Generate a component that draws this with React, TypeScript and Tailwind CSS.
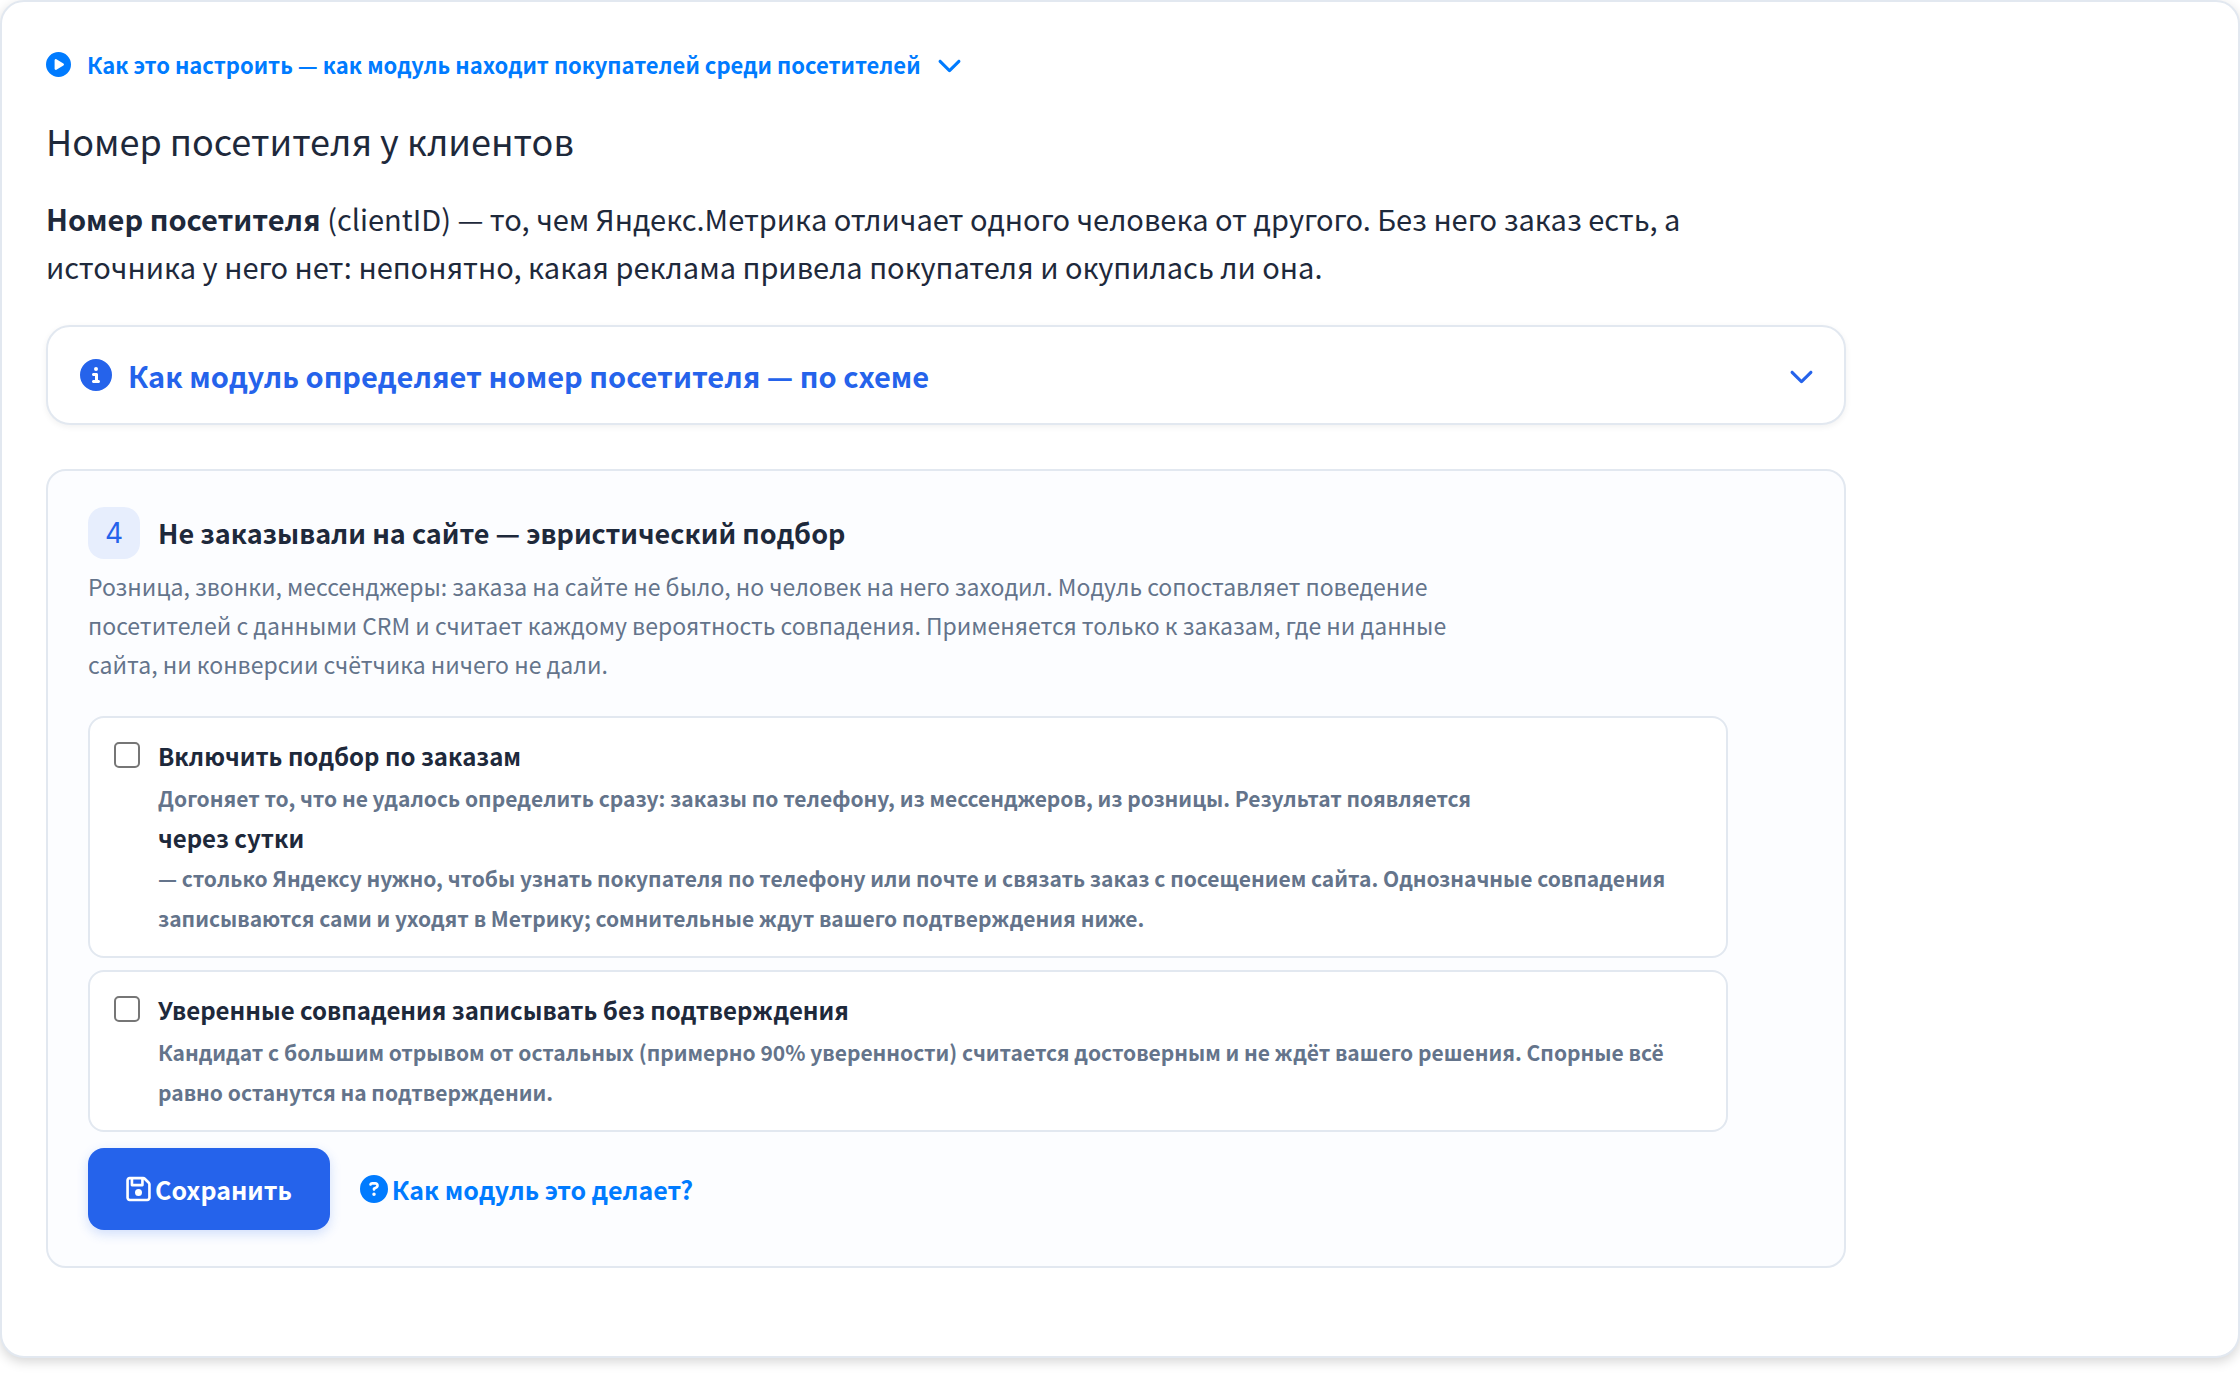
import {
  FaChevronDown,
  FaCircleInfo,
  FaCirclePlay,
  FaCircleQuestion,
  FaRegFloppyDisk,
} from "react-icons/fa6";

const options = [
  {
    id: "match-orders",
    title: "Включить подбор по заказам",
    lines: [
      {
        text: "Догоняет то, что не удалось определить сразу: заказы по телефону, из мессенджеров, из розницы. Результат появляется",
      },
      { text: "через сутки", strong: true },
      {
        text: "— столько Яндексу нужно, чтобы узнать покупателя по телефону или почте и связать заказ с посещением сайта. Однозначные совпадения записываются сами и уходят в Метрику; сомнительные ждут вашего подтверждения ниже.",
      },
    ],
  },
  {
    id: "auto-confirm",
    title: "Уверенные совпадения записывать без подтверждения",
    lines: [
      {
        text: "Кандидат с большим отрывом от остальных (примерно 90% уверенности) считается достоверным и не ждёт вашего решения. Спорные всё равно останутся на подтверждении.",
      },
    ],
  },
];

const App = () => {
  return (
    <div className="bg-white pb-7 font-['Noto_Sans_CJK_SC','Noto_Sans',sans-serif] text-[#1e293b]">
      <main className="rounded-3xl border-2 border-[#e2e8f0] bg-white px-11 pt-[38px] pb-[88px] shadow-[0_4px_12px_rgba(0,0,0,0.16)]">
        <button className="flex items-center gap-4 text-[22px] leading-[48px] font-bold text-[#007bff]">
          <FaCirclePlay className="size-[25px]" />
          Как это настроить — как модуль находит покупателей среди посетителей
          <FaChevronDown className="size-[25px]" />
        </button>

        <h1 className="mt-[22px] text-[36px] leading-[60px]">Номер посетителя у клиентов</h1>

        <p className="mt-6 max-w-[1680px] text-[29px] leading-[48px]">
          <b>Номер посетителя</b> (clientID) — то, чем Яндекс.Метрика отличает одного человека от другого. Без него
          заказ есть, а источника у него нет: непонятно, какая реклама привела покупателя и окупилась ли она.
        </p>

        <button className="mt-[35px] flex w-full max-w-[1800px] items-center gap-4 rounded-3xl border-2 border-[#e2e8f0] bg-white py-6 pr-[30px] pl-8 text-left text-[29px] leading-[48px] font-bold text-[#2563eb] shadow-[0_2px_6px_rgba(0,0,0,0.06)]">
          <FaCircleInfo className="size-8" />
          <span className="grow">Как модуль определяет номер посетителя — по схеме</span>
          <FaChevronDown className="size-[25px]" />
        </button>

        <section className="mt-11 max-w-[1800px] rounded-[20px] border-2 border-[#e2e8f0] bg-[#fcfdff] px-10 py-9">
          <div className="flex items-center gap-[18px]">
            <span className="flex size-[52px] items-center justify-center rounded-2xl bg-[#e7eefd] font-[Inter,sans-serif] text-[28px] text-[#2563eb]">
              4
            </span>
            <h2 className="text-[27px] leading-[48px] font-bold">Не заказывали на сайте — эвристический подбор</h2>
          </div>
          <p className="mt-2 max-w-[1400px] text-[23px] leading-[39px] text-[#64748b]">
            Розница, звонки, мессенджеры: заказа на сайте не было, но человек на него заходил. Модуль сопоставляет
            поведение посетителей с данными CRM и считает каждому вероятность совпадения. Применяется только к заказам,
            где ни данные сайта, ни конверсии счётчика ничего не дали.
          </p>

          <form className="mt-8 max-w-[1640px]">
            <div className="space-y-3">
              {options.map((option) => (
                <div
                  key={option.id}
                  className="flex gap-[18px] rounded-2xl border-2 border-[#e2e8f0] bg-white px-6 py-[18px]"
                >
                  <input
                    id={option.id}
                    type="checkbox"
                    className="mt-1.5 size-[26px] shrink-0 appearance-none rounded-[5px] border-2 border-[#767676] bg-white checked:bg-[#007bff]"
                  />
                  <label htmlFor={option.id} className="font-bold">
                    <span className="mb-0.5 block text-[24px] leading-10">{option.title}</span>
                    {option.lines.map((line) => (
                      <span
                        key={line.text}
                        className={
                          line.strong ? "block text-[24px] leading-10" : "block text-[21px] leading-10 text-[#64748b]"
                        }
                      >
                        {line.text}
                      </span>
                    ))}
                  </label>
                </div>
              ))}
            </div>
            <div className="mt-4 flex items-center gap-[30px] text-[25px] leading-9 font-bold">
              <button
                type="button"
                className="flex h-[82px] items-center gap-1 rounded-2xl bg-[#2563eb] px-[38px] text-white shadow-[0_4px_12px_rgba(37,99,235,0.2)]"
              >
                <FaRegFloppyDisk className="h-7 w-[25px]" />
                Сохранить
              </button>
              <a href="#how" className="flex items-center gap-1 text-[#007bff]">
                <FaCircleQuestion className="size-7" />
                Как модуль это делает?
              </a>
            </div>
          </form>
        </section>
      </main>
    </div>
  );
};

export default App;
